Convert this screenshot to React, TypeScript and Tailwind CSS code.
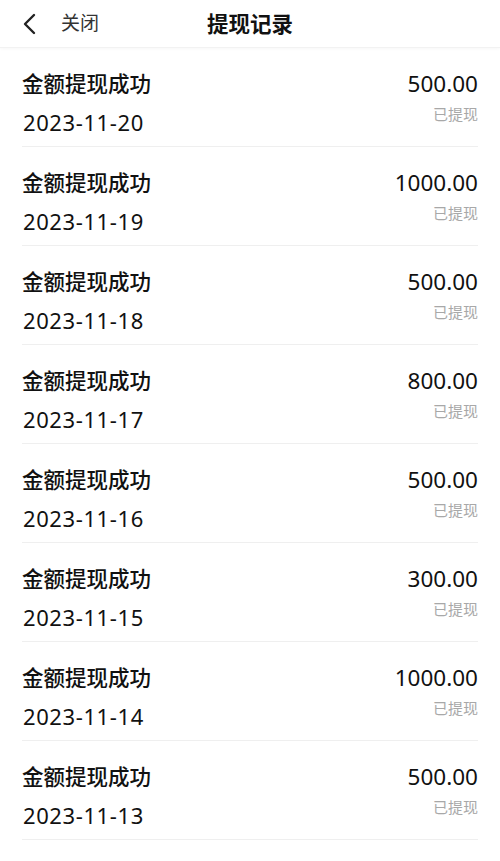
import React from "react";

const rows = [
  { amount: "500.00", date: "2023-11-20" },
  { amount: "1000.00", date: "2023-11-19" },
  { amount: "500.00", date: "2023-11-18" },
  { amount: "800.00", date: "2023-11-17" },
  { amount: "500.00", date: "2023-11-16" },
  { amount: "300.00", date: "2023-11-15" },
  { amount: "1000.00", date: "2023-11-14" },
  { amount: "500.00", date: "2023-11-13" },
];

export default function App() {
  return (
    <div
      className="w-[500px] min-h-[861px] bg-white text-[#111]"
      style={{ fontFamily: '"Noto Sans", "Noto Sans CJK SC", sans-serif' }}
    >
      <div className="relative h-[48px] flex items-center border-b border-[#f2f2f2] shadow-[0_1px_3px_rgba(0,0,0,0.03)]">
        <div className="flex items-center pl-[21px] gap-[22px]">
          <svg width="18" height="22" viewBox="0 0 18 22" fill="none">
            <path d="M13 2 L4 11 L13 20" stroke="#222" strokeWidth="2.4" strokeLinecap="round" strokeLinejoin="round" />
          </svg>
          <span className="text-[19px] leading-none text-[#333]">关闭</span>
        </div>
        <div className="absolute left-0 right-0 top-0 h-[48px] flex items-center justify-center pointer-events-none">
          <span className="text-[21.5px] font-bold text-[#111] leading-none">提现记录</span>
        </div>
      </div>
      <div className="px-[22px]">
        {rows.map((r, i) => (
          <div key={i} className="h-[99px] flex justify-between border-b border-[#efefef] pt-[23px]">
            <div className="flex flex-col">
              <span className="text-[21.5px] leading-[26px] font-medium text-[#111]">金额提现成功</span>
              <span className="mt-[12px] text-[22px] leading-[26px] text-[#111] pl-[1px] tracking-[0.6px]">{r.date}</span>
            </div>
            <div className="flex flex-col items-end">
              <span className="text-[22.5px] leading-[26px] text-[#111]">{r.amount}</span>
              <span className="mt-[7px] text-[15px] leading-[20px] text-[#a8a8a8]">已提现</span>
            </div>
          </div>
        ))}
      </div>
    </div>
  );
}
